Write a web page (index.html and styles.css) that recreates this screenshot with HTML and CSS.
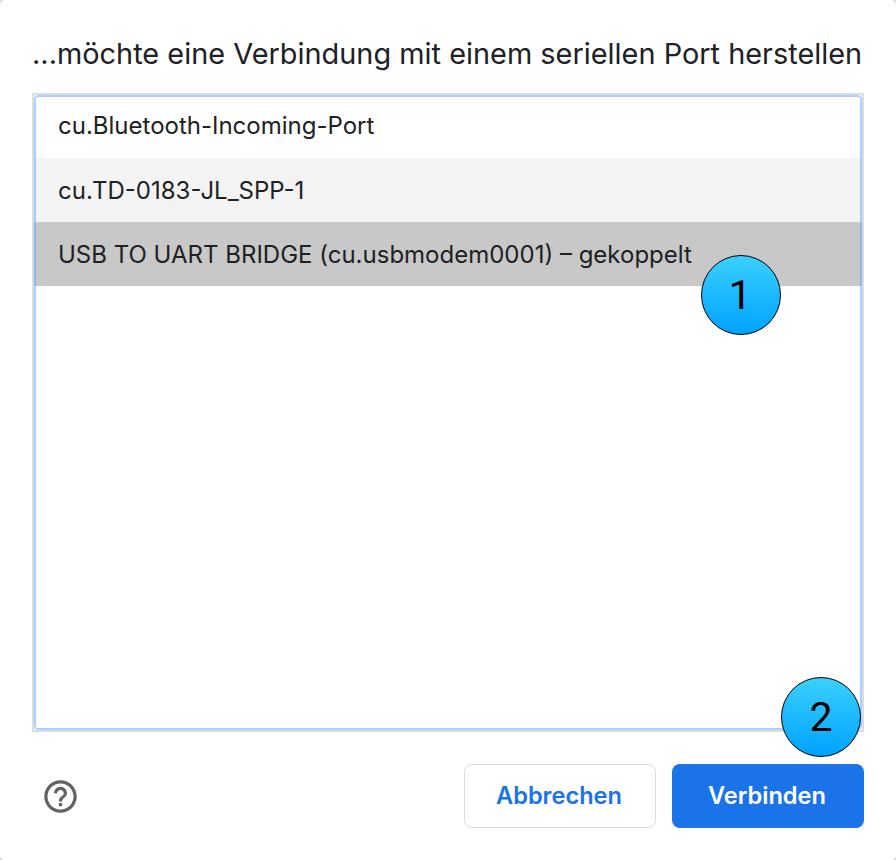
FILE: index.html
```html
<!DOCTYPE html>
<html lang="de">
<head>
    <meta charset="UTF-8">
    <title>Serieller Port</title>
    <link rel="stylesheet" href="styles.css">
</head>
<body>
    <div class="dialog">
        <h1 class="title">...möchte eine Verbindung mit einem seriellen Port herstellen</h1>
        <div class="port-frame">
            <div class="port-list">
                <div class="port port-first">cu.Bluetooth-Incoming-Port</div>
                <div class="port port-hover">cu.TD-0183-JL_SPP-1</div>
                <div class="port port-selected">USB TO UART BRIDGE (cu.usbmodem0001) – gekoppelt</div>
            </div>
        </div>
        <div class="footer">
            <svg class="help" width="39" height="39" viewBox="0 0 24 24" aria-label="Hilfe">
                <path fill="#5f6368" d="M11 18h2v-2h-2v2zm1-16C6.48 2 2 6.48 2 12s4.48 10 10 10 10-4.48 10-10S17.52 2 12 2zm0 18c-4.41 0-8-3.59-8-8s3.59-8 8-8 8 3.59 8 8-3.59 8-8 8zm0-14c-2.21 0-4 1.79-4 4h2c0-1.1.9-2 2-2s2 .9 2 2c0 2-3 1.75-3 5h2c0-2.25 3-2.5 3-5 0-2.21-1.79-4-4-4z"/>
            </svg>
            <div class="buttons">
                <button class="btn btn-cancel">Abbrechen</button>
                <button class="btn btn-connect">Verbinden</button>
            </div>
        </div>
        <div class="badge badge-one">1</div>
        <div class="badge badge-two">2</div>
    </div>
</body>
</html>
```

FILE: styles.css
```css
html {
    background-color: #d8d8d8;
}
body {
    margin: 0;
    font-family: Inter, "Noto Sans", sans-serif;
    color: #202124;
}
.dialog {
    position: relative;
    box-sizing: border-box;
    width: 896px;
    height: 860px;
    padding: 38px 32px 32px;
    background-color: #fff;
    border-radius: 5px;
    display: flex;
    flex-direction: column;
}
.title {
    margin: 0 0 23px;
    font-size: 28.9px;
    font-weight: 400;
    line-height: 32px;
    white-space: nowrap;
}
.port-frame {
    box-sizing: border-box;
    height: 639px;
    border: 2px solid #dadce0;
}
.port-list {
    position: relative;
    height: 100%;
    border-radius: 4px;
    overflow: hidden;
    background-color: #fff;
}
.port-list::after {
    content: "";
    position: absolute;
    top: 0;
    right: 0;
    bottom: 0;
    left: 0;
    border: 2px solid rgba(100, 170, 255, 0.55);
    border-radius: 4px;
}
.port {
    height: 64px;
    padding-left: 24px;
    font-size: 24px;
    line-height: 66px;
    white-space: nowrap;
}
.port-first {
    height: 63px;
    line-height: 62px;
}
.port-hover {
    background-color: #f3f3f3;
}
.port-selected {
    background-color: #c8c8c8;
}
.footer {
    margin-top: 32px;
    display: flex;
    justify-content: space-between;
    align-items: center;
}
.help {
    margin-left: 9px;
}
.buttons {
    display: flex;
    gap: 16px;
}
.btn {
    box-sizing: border-box;
    width: 192px;
    height: 64px;
    padding: 0 8px 1px 6px;
    border-radius: 8px;
    font-family: Inter, "Noto Sans", sans-serif;
    font-size: 23.6px;
    font-weight: 600;
}
.btn-cancel {
    background-color: #fff;
    border: 1px solid #dadce0;
    color: #1a73e8;
}
.btn-connect {
    background-color: #1a73e8;
    border: none;
    color: #fff;
}
.badge {
    position: absolute;
    box-sizing: border-box;
    width: 80px;
    height: 80px;
    border: 1px solid #000;
    border-radius: 50%;
    background: linear-gradient(#3ad0ff, #00a2ff);
    color: #000;
    font-family: Roboto, Arial, sans-serif;
    font-size: 41px;
    line-height: 78px;
    text-align: center;
}
.badge-one {
    left: 701px;
    top: 255px;
    padding-right: 2px;
}
.badge-two {
    left: 781px;
    top: 677px;
}
```
